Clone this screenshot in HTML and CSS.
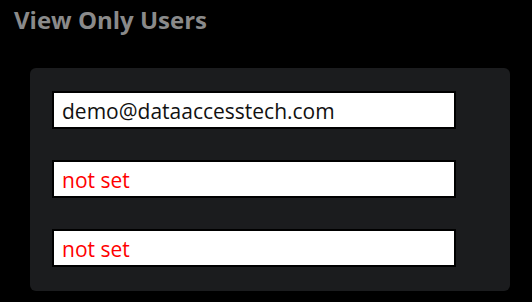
FILE: index.html
```html
<!DOCTYPE html>
<html>
<head>
<meta charset="utf-8">
<link rel="stylesheet" href="styles.css">
</head>
<body>
<h2 class="title">View Only Users</h2>
<div class="panel">
  <div class="field">demo@dataaccesstech.com</div>
  <div class="field unset">not set</div>
  <div class="field unset">not set</div>
</div>
</body>
</html>
```
FILE: styles.css
```css
html, body {
  margin: 0;
  padding: 0;
  background: #000;
}
body {
  font-family: "Open Sans", "Noto Sans", sans-serif;
  width: 532px;
  height: 302px;
  overflow: hidden;
}
.title {
  margin: 0;
  padding: 4px 0 0 14px;
  font-size: 24px;
  line-height: 32px;
  font-weight: 700;
  color: #8a8a8a;
}
.panel {
  margin: 32px 0 0 30px;
  width: 480px;
  box-sizing: border-box;
  padding: 23px 54px 24px 22px;
  background: #1b1c1e;
  border-radius: 6px;
  display: flex;
  flex-direction: column;
  gap: 31px;
}
.field {
  height: 38px;
  box-sizing: border-box;
  border: 2px solid #000;
  background: #fff;
  color: #111;
  font-size: 21px;
  line-height: 31px;
  padding: 3px 0 0 8px;
}
.field.unset {
  color: #ff0000;
}
```
